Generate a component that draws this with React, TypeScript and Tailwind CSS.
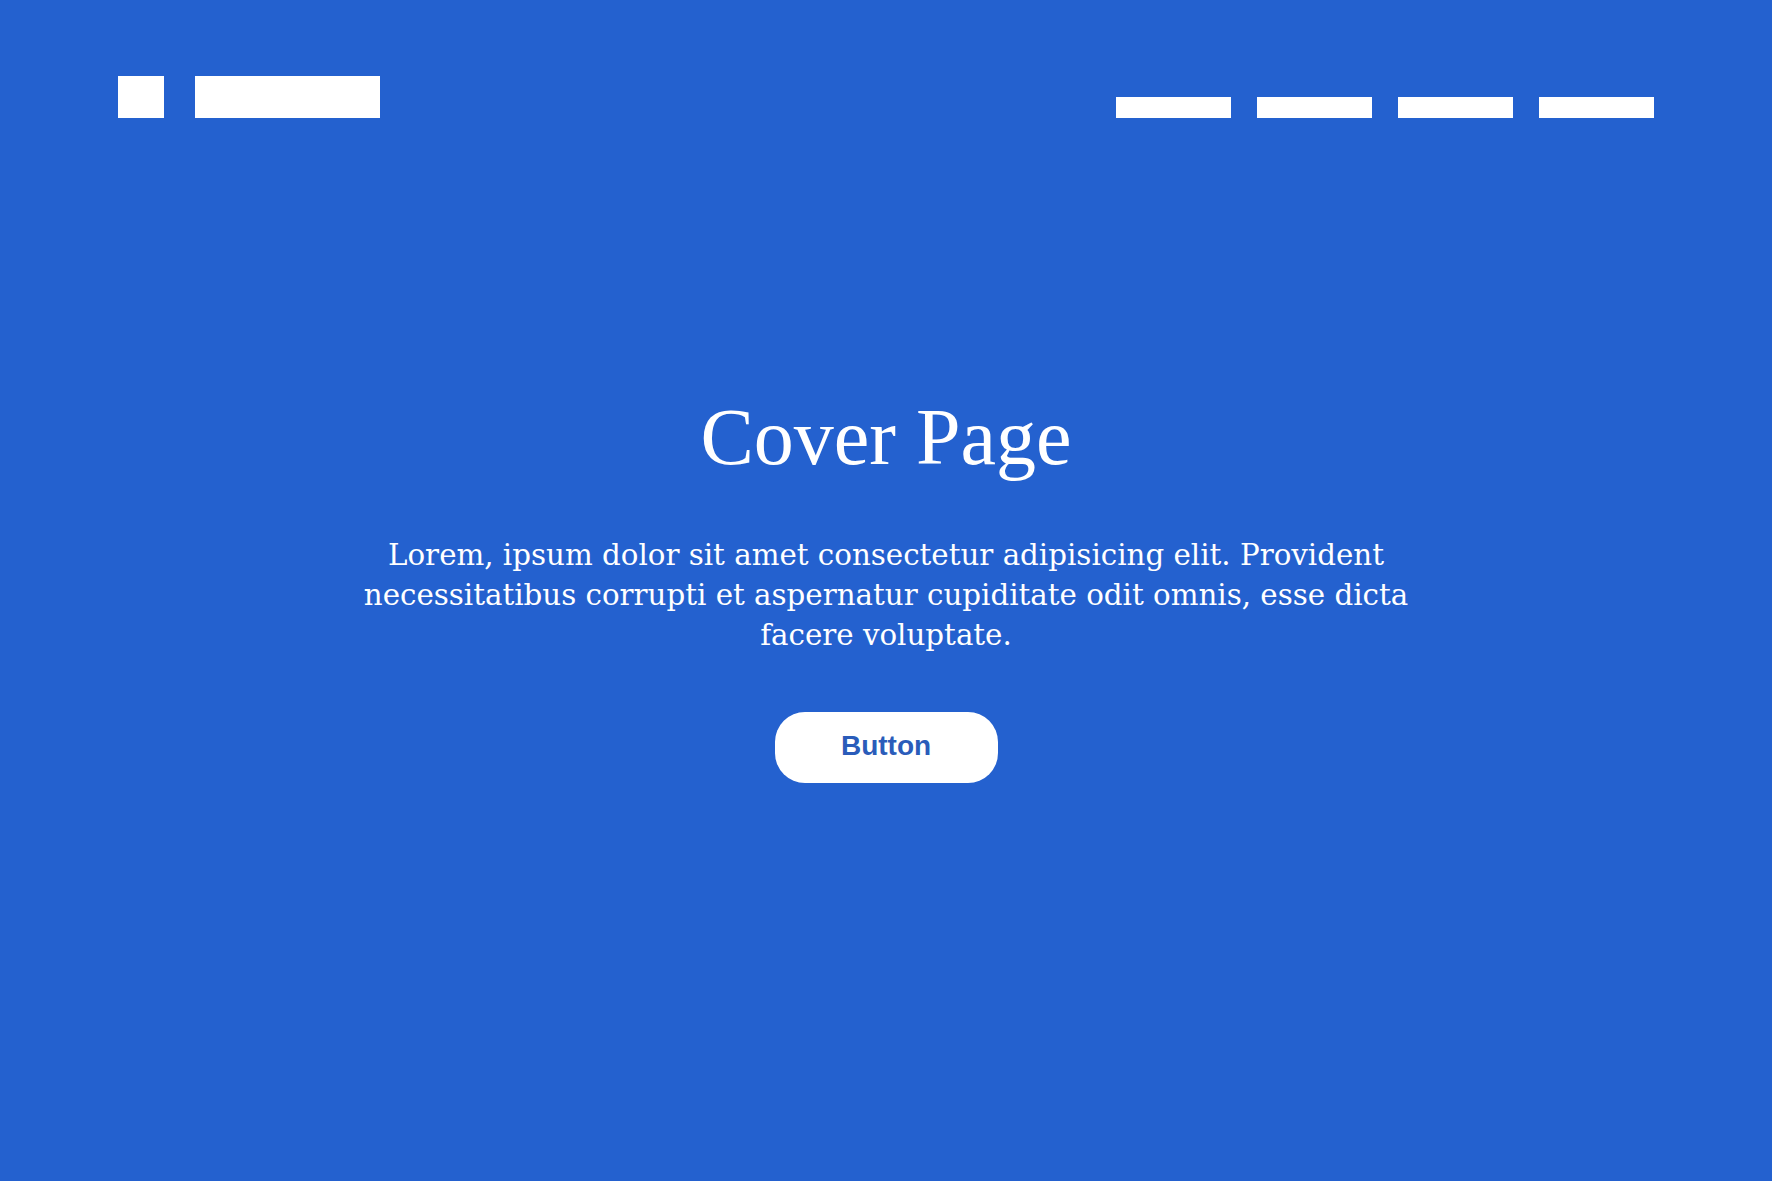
const NAV_ITEMS = ["one", "two", "three", "four"];

function Header() {
  return (
    <header className="flex items-end justify-between px-[118px] pt-[76px]">
      <div className="flex items-end gap-[31px]">
        <div className="h-[42px] w-[46px] bg-white" />
        <div className="h-[42px] w-[185px] bg-white" />
      </div>
      <nav className="flex items-end gap-[26px]">
        {NAV_ITEMS.map((item) => (
          <div key={item} className="h-[21px] w-[115px] bg-white" />
        ))}
      </nav>
    </header>
  );
}

export default function App() {
  return (
    <div className="flex min-h-screen flex-col bg-[#2461cf] pb-[120px] text-white">
      <Header />

      <main className="flex flex-1 flex-col items-center justify-center text-center">
        <h1 className="font-['Liberation_Serif',serif] text-[80px] leading-none font-normal">
          Cover Page
        </h1>
        <p className="mt-[58px] max-w-[1060px] font-['DejaVu_Serif',serif] text-[29.3px] leading-[40px]">
          Lorem, ipsum dolor sit amet consectetur adipisicing elit. Provident
          necessitatibus corrupti et aspernatur cupiditate odit omnis, esse dicta
          facere voluptate.
        </p>
        <button className="mt-[57px] flex h-[71px] w-[223px] items-center justify-center rounded-[30px] bg-white pb-[3px] font-['Liberation_Sans',Arial,sans-serif] text-[28px] font-bold text-[#2a5cba]">
          Button
        </button>
      </main>
    </div>
  );
}
